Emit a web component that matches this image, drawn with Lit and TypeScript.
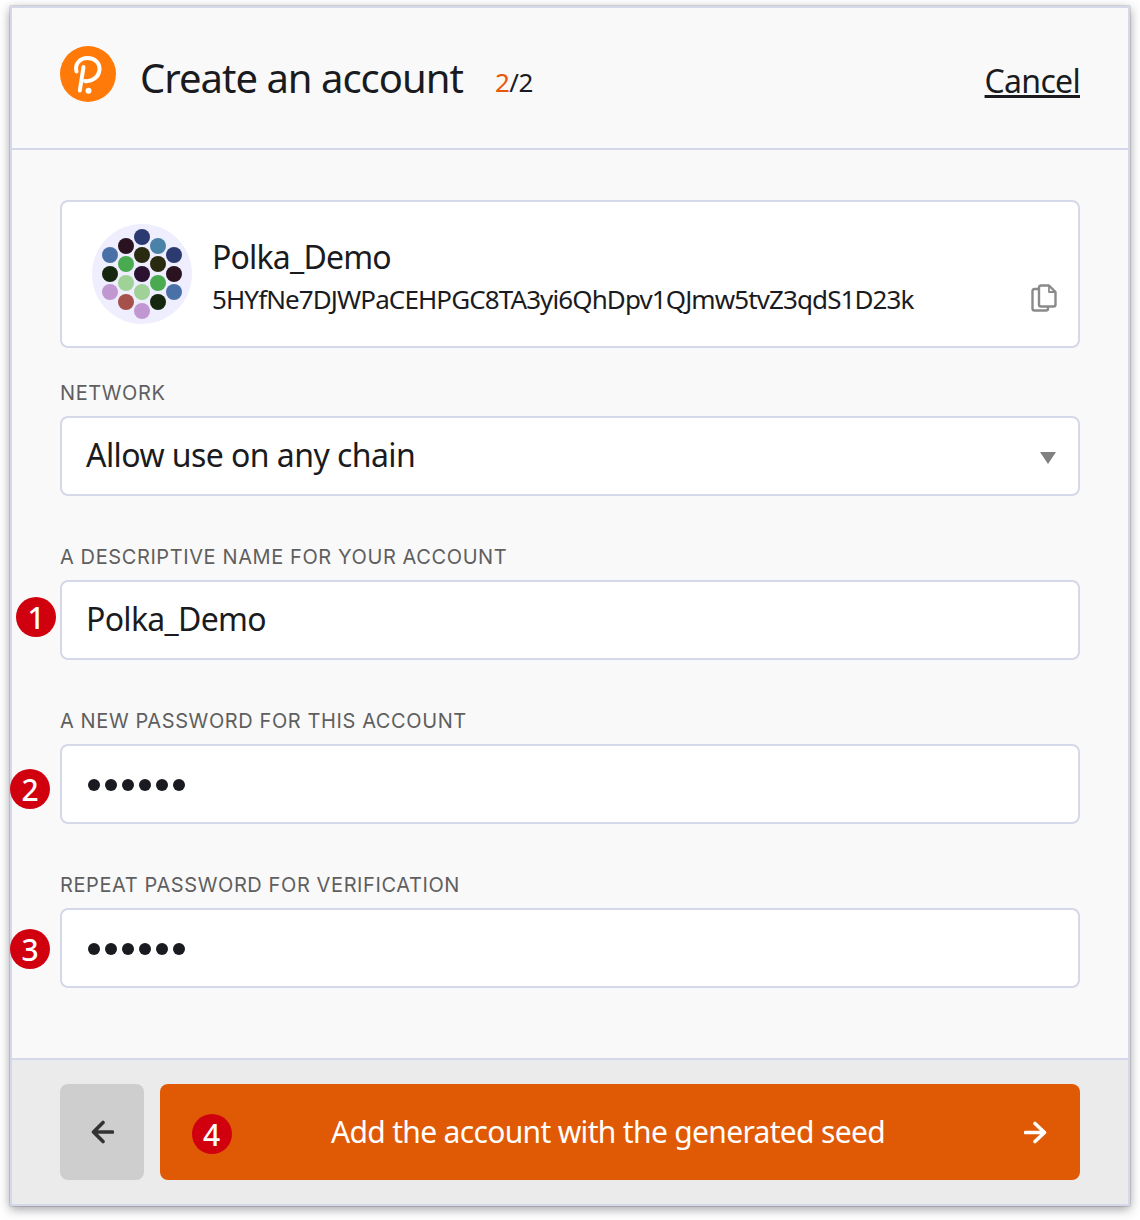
import { LitElement, css, html, svg } from "lit";
import { customElement } from "lit/decorators.js";

// x, y, colour of each identicon dot, in the 100x100 box of the circle
const DOTS: [number, number, string][] = [
  [50, 13, "#2b3a70"],
  [34, 22, "#2b1220"],
  [66, 22, "#4a82a8"],
  [18, 31, "#4a70a8"],
  [50, 31, "#2a2a10"],
  [82, 31, "#2b3a70"],
  [34, 40, "#4aaa50"],
  [66, 40, "#2a2a10"],
  [18, 50, "#15280f"],
  [50, 50, "#2b1230"],
  [82, 50, "#2b1220"],
  [34, 59, "#a0d298"],
  [66, 59, "#4aaa50"],
  [18, 68, "#c097d0"],
  [50, 68, "#a0d298"],
  [82, 68, "#4a70a8"],
  [34, 78, "#a5504a"],
  [66, 78, "#15280f"],
  [50, 87, "#c097d0"],
];

@customElement("app-root")
export class AppRoot extends LitElement {
  renderBadge(n: number, cls: string) {
    return html`<span class="badge ${cls}">${n}</span>`;
  }

  render() {
    return html`
      <div class="window">
        <header>
          <svg class="logo" viewBox="0 0 56 56">
            <circle cx="28" cy="28" r="28" fill="#ff7a09" />
            <path
              d="M16.500 25.500c-2-7 3-13.500 11-13.500 7.500 0 12.500 5 12 11.500-.5 7.500-7.500 12.500-14.500 11.500"
              fill="none"
              stroke="#fff"
              stroke-width="4"
              stroke-linecap="round"
            />
            <path d="M23.500 21 19.800 44.500" fill="none" stroke="#fff" stroke-width="4" stroke-linecap="round" />
            <circle cx="28.500" cy="44.700" r="3" fill="#fff" />
          </svg>
          <h1>Create an account</h1>
          <span class="step"><b>2</b>/2</span>
          <a class="cancel">Cancel</a>
        </header>

        <main>
          <div class="card">
            <svg class="identicon" viewBox="0 0 100 100">
              <circle cx="50" cy="50" r="50" fill="#eeeeff" />
              ${DOTS.map(([x, y, c]) => svg`<circle cx=${x} cy=${y} r="8" fill=${c} />`)}
            </svg>
            <div class="who">
              <div class="name">Polka_Demo</div>
              <div class="address">5HYfNe7DJWPaCEHPGC8TA3yi6QhDpv1QJmw5tvZ3qdS1D23k</div>
            </div>
            <svg class="copy" viewBox="0 0 26 28" fill="none" stroke="#8a8a8a" stroke-width="2.400" stroke-linejoin="round">
              <path d="M8 5H3.500Q1.500 5 1.500 7V24.500Q1.500 26.500 3.500 26.500H15Q17 26.500 17 24.500V22.500" />
              <path d="M10 1.500H18L24.500 8V20.500Q24.500 22.500 22.500 22.500H10Q8 22.500 8 20.500V3.500Q8 1.500 10 1.500Z" />
              <path d="M18 1.500V8H24.500" stroke-width="1.800" />
            </svg>
          </div>

          <label class="first">NETWORK</label>
          <div class="box select">
            <span>Allow use on any chain</span>
            <span class="caret"></span>
          </div>

          <label>A DESCRIPTIVE NAME FOR YOUR ACCOUNT</label>
          <div class="field">
            ${this.renderBadge(1, "b1")}
            <input class="box" .value=${"Polka_Demo"} />
          </div>

          <label>A NEW PASSWORD FOR THIS ACCOUNT</label>
          <div class="field">
            ${this.renderBadge(2, "b2")}
            <div class="box dots">${[1, 2, 3, 4, 5, 6].map(() => html`<i></i>`)}</div>
          </div>

          <label>REPEAT PASSWORD FOR VERIFICATION</label>
          <div class="field">
            ${this.renderBadge(3, "b3")}
            <div class="box dots">${[1, 2, 3, 4, 5, 6].map(() => html`<i></i>`)}</div>
          </div>
        </main>

        <footer>
          <button class="back">
            <svg viewBox="0 0 24 24" width="24" height="24" fill="none" stroke="#333" stroke-width="3.600" stroke-linecap="round" stroke-linejoin="round">
              <path d="M22.500 12H3.500M13 2.500 3.500 12l9.500 9.500" />
            </svg>
          </button>
          <button class="next">
            ${this.renderBadge(4, "b4")}
            <span>Add the account with the generated seed</span>
            <svg class="arrow" viewBox="0 0 24 24" width="24" height="24" fill="none" stroke="#fff" stroke-width="3.600" stroke-linecap="round" stroke-linejoin="round">
              <path d="M1.500 12.500H20M11 3.500l9.500 9-9.500 9" />
            </svg>
          </button>
        </footer>
      </div>
    `;
  }

  static styles = css`
    :host {
      display: block;
      height: 1220px;
      padding: 6px 10px 0;
      box-sizing: border-box;
      background: #fff;
      font-family: "Noto Sans", sans-serif;
      color: #1a1b20;
    }
    .window {
      width: 1120px;
      height: 1200px;
      box-sizing: border-box;
      border: 2px solid #d5d8e8;
      background: #f9f9f9;
      box-shadow: 0 0 1px rgba(0, 0, 0, 0.6), 0 3px 10px rgba(60, 60, 70, 0.5);
      display: flex;
      flex-direction: column;
    }
    header {
      height: 142px;
      flex: none;
      box-sizing: border-box;
      border-bottom: 2px solid #d5d8e8;
      padding: 0 48px;
      display: flex;
      align-items: center;
    }
    .logo {
      width: 56px;
      height: 56px;
      margin: -8px 24px 0 0;
    }
    h1 {
      margin: -2px 0 0;
      font-size: 40px;
      letter-spacing: -1px;
      font-weight: 400;
    }
    .step {
      font-size: 26px;
      letter-spacing: -0.5px;
      margin: 8px 0 0 32px;
    }
    .step b {
      font-weight: 400;
      color: #e6590b;
    }
    .cancel {
      margin: 4px 0 0 auto;
      font-size: 32px;
      letter-spacing: -0.7px;
      text-decoration: underline;
    }
    main {
      flex: 1;
      padding: 50px 48px 0;
    }
    .card {
      height: 148px;
      box-sizing: border-box;
      border: 2px solid #d5d8e8;
      border-radius: 8px;
      background: #fff;
      padding: 0 34px 0 30px;
      display: flex;
      align-items: center;
      position: relative;
    }
    .identicon {
      width: 100px;
      height: 100px;
      flex: none;
      margin-right: 20px;
    }
    .who {
      margin-top: 6px;
    }
    .name {
      font-size: 32px;
      letter-spacing: -0.8px;
      line-height: 44px;
    }
    .address {
      font-size: 26px;
      letter-spacing: -0.9px;
      line-height: 40px;
    }
    .copy {
      width: 26px;
      height: 28px;
      position: absolute;
      right: 21px;
      top: 82px;
    }
    label {
      display: block;
      margin-top: 51px;
      height: 20px;
      line-height: 20px;
      font-family: Inter, sans-serif;
      font-size: 20px;
      letter-spacing: 0.6px;
      color: #5f5f5f;
      margin-bottom: 13px;
    }
    label.first {
      margin-top: 35px;
    }
    .field {
      position: relative;
    }
    .box {
      width: 100%;
      height: 80px;
      box-sizing: border-box;
      border: 2px solid #d5d8e8;
      border-radius: 8px;
      background: #fff;
      padding: 0 24px 3px;
      font: inherit;
      font-size: 32px;
      letter-spacing: -0.7px;
      color: inherit;
      display: flex;
      align-items: center;
      outline: none;
    }
    .select {
      justify-content: space-between;
      letter-spacing: -0.56px;
    }
    .caret {
      width: 0;
      height: 0;
      border-left: 8px solid transparent;
      border-right: 8px solid transparent;
      border-top: 12px solid #808080;
      margin: 7px -2px 0 0;
    }
    .dots {
      gap: 5px;
      padding: 2px 24px 0 26px;
    }
    .dots i {
      width: 12px;
      height: 12px;
      border-radius: 50%;
      background: #1a1b20;
    }
    .badge {
      position: absolute;
      width: 40px;
      height: 40px;
      border-radius: 50%;
      background: #d0000f;
      color: #fff;
      font-size: 30px;
      font-weight: 500;
      letter-spacing: 0;
      display: flex;
      align-items: center;
      justify-content: center;
      z-index: 1;
    }
    .b1 {
      left: -44px;
      top: 17px;
    }
    .b2 {
      left: -50px;
      top: 25px;
    }
    .b3 {
      left: -50px;
      top: 21px;
    }
    .b4 {
      left: 31.5px;
      top: 30px;
    }
    footer {
      height: 146px;
      flex: none;
      box-sizing: border-box;
      border-top: 2px solid #d5d8e8;
      background: #ebebeb;
      padding: 24px 48px;
      display: flex;
      gap: 16px;
    }
    button {
      height: 96px;
      border: 0;
      border-radius: 8px;
      font: inherit;
      padding: 0;
      display: flex;
      align-items: center;
      justify-content: center;
    }
    .back {
      width: 84px;
      flex: none;
      background: #cecece;
    }
    .next {
      flex: 1;
      position: relative;
      padding: 0 24px 2px 0;
      background: #e05a05;
      color: #fff;
      font-size: 30px;
      letter-spacing: -0.67px;
    }
    .arrow {
      position: absolute;
      right: 32px;
      top: 36px;
    }
    input.box {
      display: block;
    }
  `;
}

declare global {
  interface HTMLElementTagNameMap {
    "app-root": AppRoot;
  }
}
